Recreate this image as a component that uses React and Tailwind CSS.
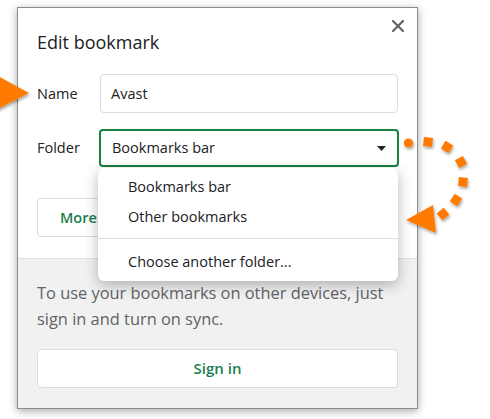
import React from "react";

export default function App() {
  const font = { fontFamily: '"Open Sans", "Noto Sans", sans-serif' };
  const squares = [
    [428, 142, 6],
    [447, 147, 31],
    [461, 162, 62],
    [463, 182, 95],
    [456, 200, 122],
    [443, 214, 140],
  ];
  return (
    <div className="relative w-[490px] h-[419px] bg-white overflow-hidden" style={font}>
      <div className="pt-[7px] pl-[17px]">
        <div className="relative flex flex-col w-[401px] h-[402px] border border-[#8c8c8c] bg-white shadow-[0_2px_8px_rgba(0,0,0,0.35)]">
          <button className="absolute right-[12px] top-[11px] w-[14px] h-[14px] flex items-center justify-center">
            <svg width="12" height="12" viewBox="0 0 12 12">
              <path d="M1 1 L11 11 M11 1 L1 11" stroke="#5f6368" strokeWidth="2.2" strokeLinecap="square" />
            </svg>
          </button>
          <div className="px-[19px]">
            <div className="pt-[21px] text-[18px] leading-[26px] text-[#202124]">Edit bookmark</div>
            <div className="mt-[19px] flex items-center">
              <div className="w-[63px] text-[14.5px] text-[#202124]">Name</div>
              <div className="flex-1 h-[39px] border border-[#dadce0] rounded-[4px] flex items-center px-[10px] text-[14.5px] text-[#202124]">
                Avast
              </div>
            </div>
            <div className="mt-[16px] flex items-center">
              <div className="w-[62px] text-[14.5px] text-[#202124]">Folder</div>
              <div className="flex-1 -mr-[1px] h-[38px] border-2 border-[#188040] rounded-[4px] flex items-center justify-between pl-[11px] pr-[11px] text-[14.5px] text-[#202124]">
                <span>Bookmarks bar</span>
                <svg width="9" height="5" viewBox="0 0 9 5">
                  <path d="M0 0 L9 0 L4.5 5 Z" fill="#202124" />
                </svg>
              </div>
            </div>
            <div className="mt-[31px] flex items-center">
              <button className="h-[39px] px-[22px] border border-[#dadce0] rounded-[4px] text-[14.5px] font-semibold text-[#188050]">
                More...
              </button>
            </div>
          </div>
          <div className="mt-[21px] flex-1 border-t border-[#e0e0e0] bg-[#f1f1f1] px-[19px] pt-[21px]">
            <p className="text-[16.4px] leading-[26px] text-[#5f6368]">
              To use your bookmarks on other devices, just sign in and turn on sync.
            </p>
            <button className="mt-[17px] w-full h-[39px] bg-white border border-[#dadce0] rounded-[4px] text-[15px] font-semibold text-[#188050]">
              Sign in
            </button>
          </div>
        </div>
      </div>

      <div className="absolute left-[98px] top-[168px] w-[300px] bg-white rounded-[6px] shadow-[0_4px_14px_rgba(0,0,0,0.28)] pt-[4px] pb-[4px] text-[14.5px] text-[#202124]">
        <div className="h-[30px] flex items-center pl-[30px]">Bookmarks bar</div>
        <div className="h-[30px] flex items-center pl-[30px]">Other bookmarks</div>
        <div className="mt-[6px] border-t border-[#dcdcdc]" />
        <div className="mt-[8px] h-[30px] flex items-center pl-[30px]">Choose another folder...</div>
      </div>

      <svg className="absolute left-0 top-0 pointer-events-none" width="490" height="419" viewBox="0 0 490 419">
        <defs>
          <filter id="sh" x="-50%" y="-50%" width="200%" height="200%">
            <feDropShadow dx="1" dy="2" stdDeviation="1.6" floodColor="#000" floodOpacity="0.35" />
          </filter>
        </defs>
        <g filter="url(#sh)" fill="#ff7a00">
          <polygon points="-4,75 29,93 -4,110" />
          <circle cx="408.5" cy="143" r="4.6" />
          {squares.map(([x, y, a], i) => (
            <rect key={i} x={x - 4.5} y={y - 4.5} width="9" height="9" transform={`rotate(${a} ${x} ${y})`} />
          ))}
          <polygon points="406,220 433,205 436,233" />
        </g>
      </svg>
    </div>
  );
}
